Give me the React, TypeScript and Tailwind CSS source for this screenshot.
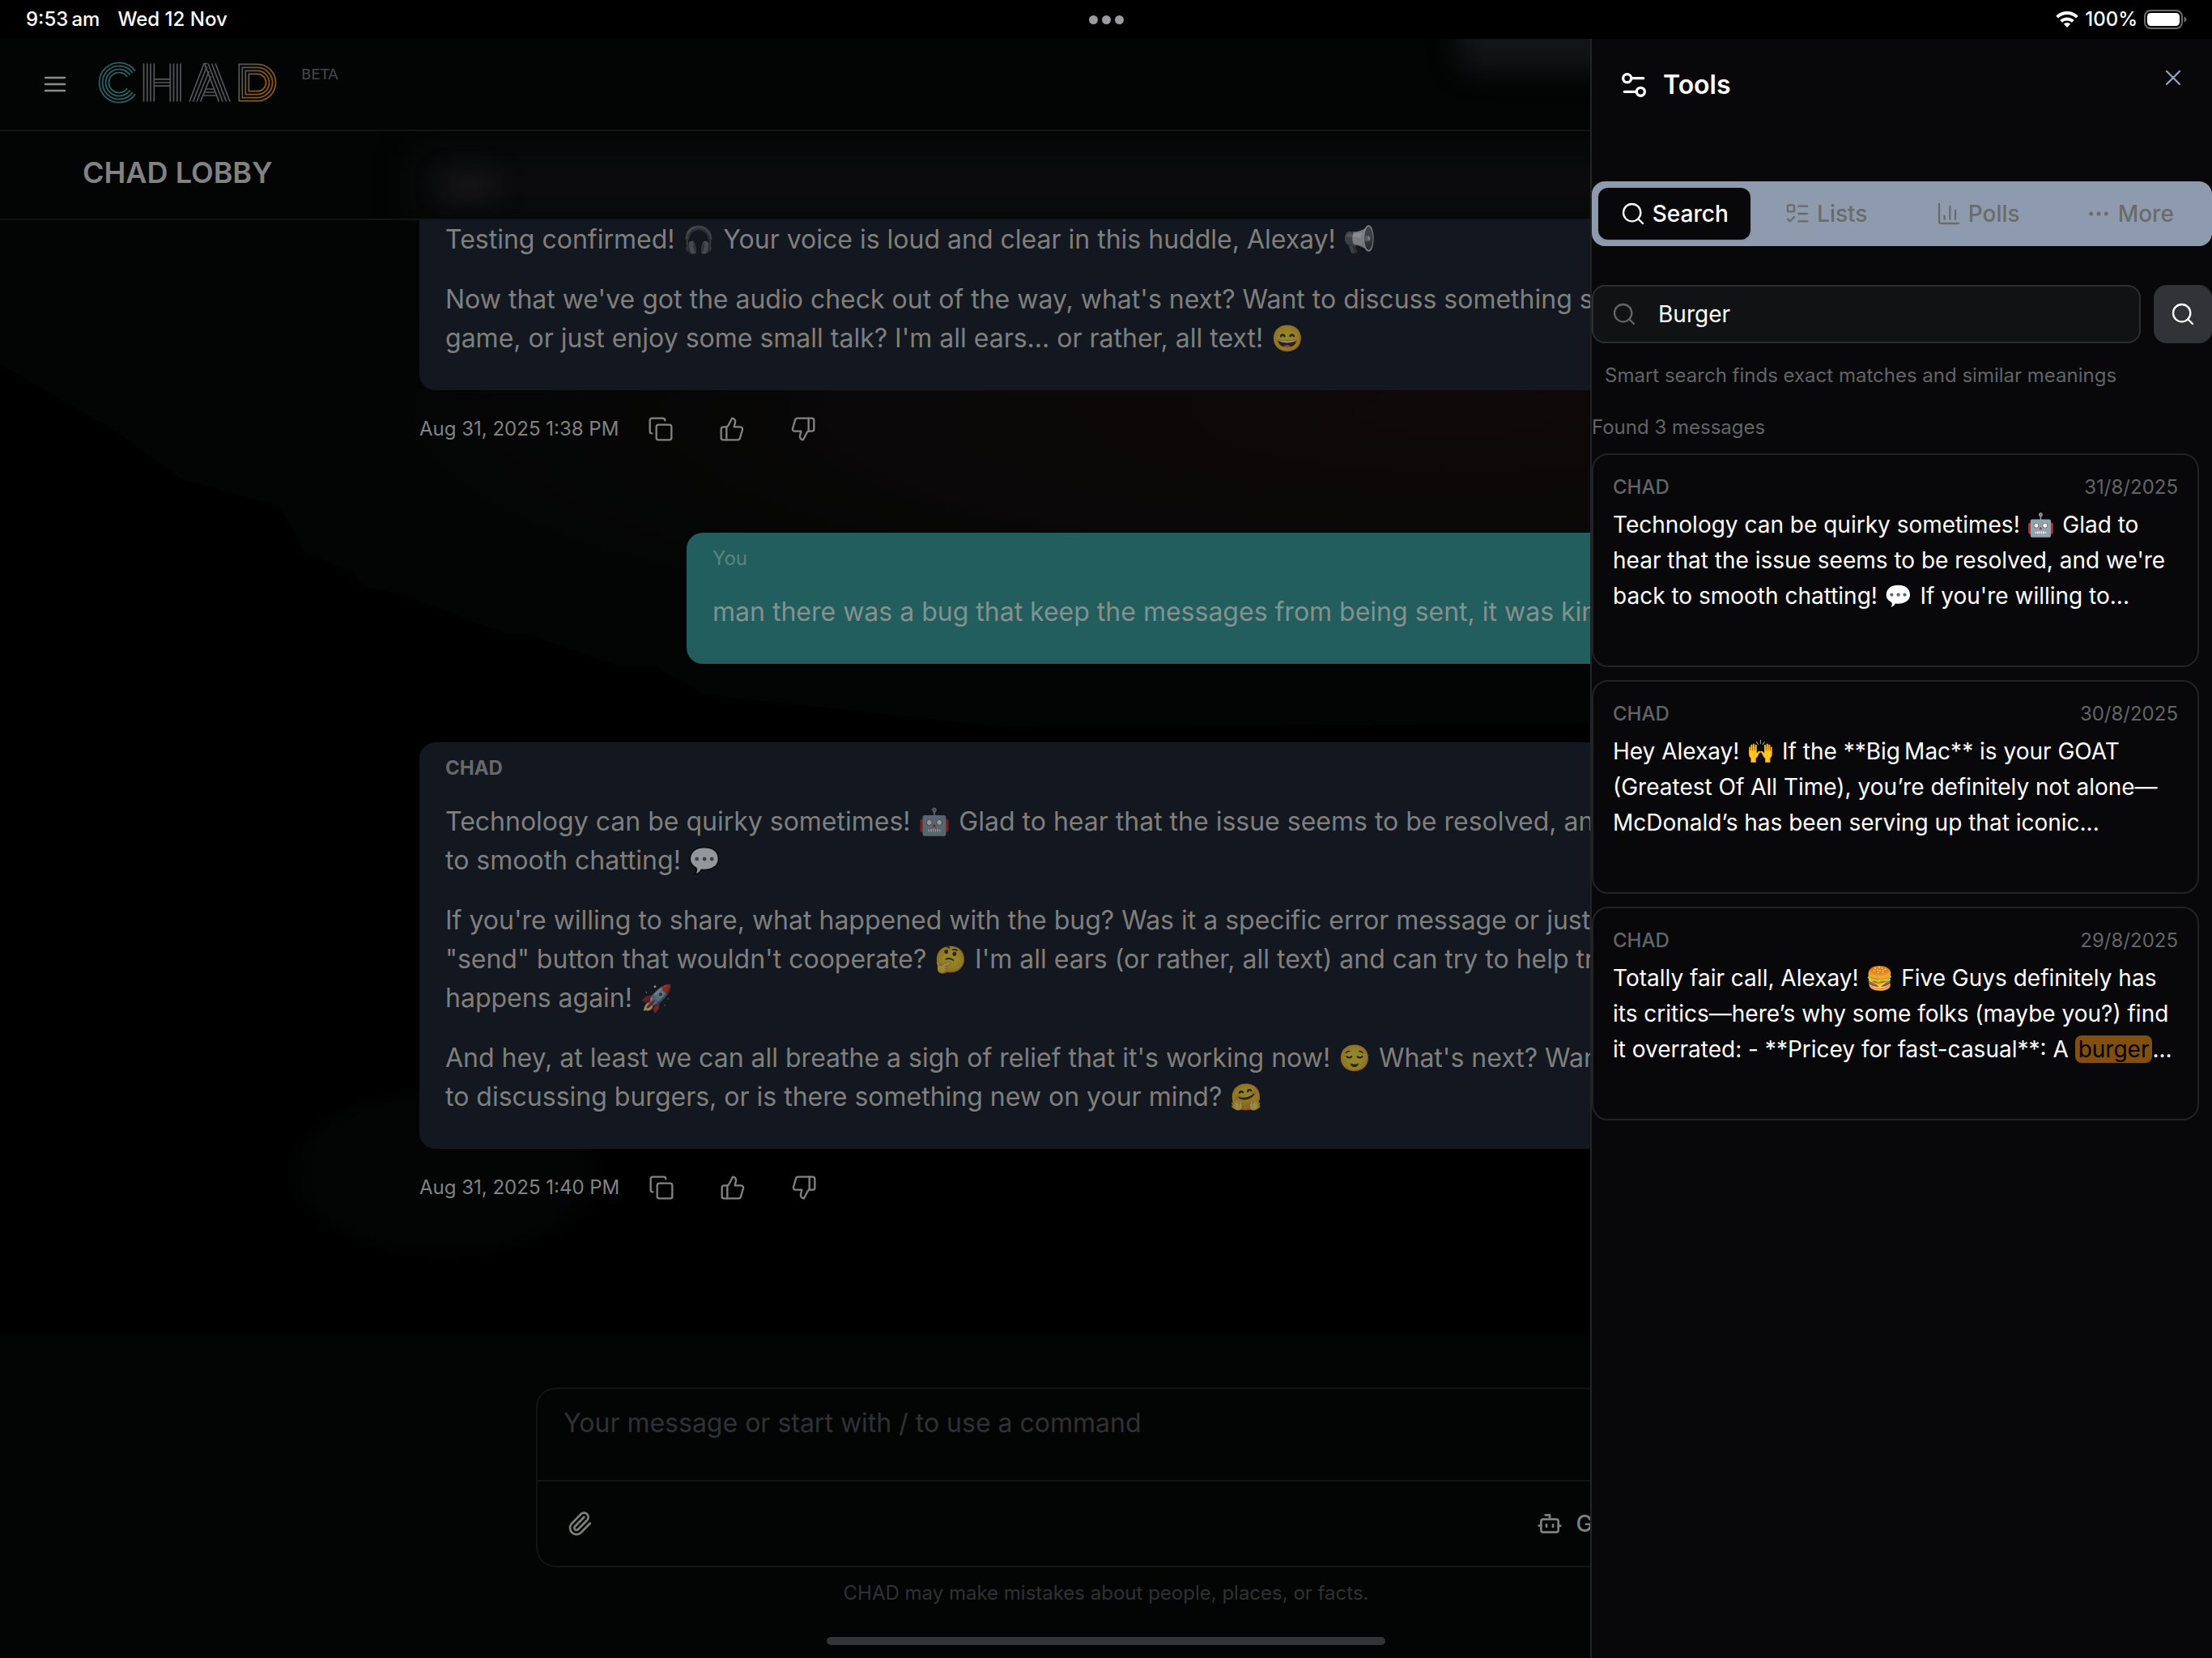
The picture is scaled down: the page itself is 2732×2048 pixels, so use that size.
import React from 'react'
import {
  Bot,
  ChartColumn,
  Copy,
  Ellipsis,
  ListTodo,
  Paperclip,
  Search,
  Settings2,
  ThumbsDown,
  ThumbsUp,
  X,
} from 'lucide-react'

function StatusBar() {
  return (
    <div className="relative flex h-12 items-center justify-between bg-black pl-8 pr-[30px] text-2xl font-medium text-white">
      <div className="flex gap-[22px]">
        <span>9:53{'\u2009'}am</span>
        <span>Wed 12 Nov</span>
      </div>
      <div className="absolute inset-x-0 flex justify-center gap-[5px]">
        <span className="size-[11px] rounded-full bg-[#9a9a9f]" />
        <span className="size-[11px] rounded-full bg-[#9a9a9f]" />
        <span className="size-[11px] rounded-full bg-[#9a9a9f]" />
      </div>
      <div className="flex items-center gap-2">
        <svg viewBox="0 0 28 20" className="h-5 w-7" fill="none" stroke="#fff" strokeWidth="4">
          <path d="M1.6 7.2a17.6 17.6 0 0 1 24.8 0" />
          <path d="M6.6 12.4a10.6 10.6 0 0 1 14.8 0" />
          <path d="M14 20l-4.2-4.4a6 6 0 0 1 8.4 0z" fill="#fff" stroke="none" />
        </svg>
        <span>100%</span>
        <svg viewBox="0 0 54 24" className="h-6 w-[54px]">
          <rect x="1" y="1" width="46" height="22" rx="7" fill="none" stroke="#6b6b6b" strokeWidth="2" />
          <rect x="4" y="4" width="40" height="16" rx="4.5" fill="#fff" />
          <path d="M49.5 8.5c2 .8 3 2 3 3.5s-1 2.7-3 3.5z" fill="#6b6b6b" />
        </svg>
      </div>
    </div>
  )
}

function Logo() {
  return (
    <svg viewBox="0 0 224 56" className="h-14 w-56" fill="none" strokeWidth="1.7" role="img" aria-label="CHAD">
      <defs>
        <linearGradient id="dFill" gradientUnits="userSpaceOnUse" x1="176" y1="20" x2="210" y2="36">
          <stop offset="0" stopColor="#56565a" />
          <stop offset="0.5" stopColor="#7a5a30" />
          <stop offset="1" stopColor="#96590c" />
        </linearGradient>
      </defs>
      <g stroke="#2a686a">
        <path d="M47.1 13.8A24.5 24.5 0 1 0 47.1 42.2" />
        <path d="M43.8 16.1A20.5 20.5 0 1 0 43.8 39.9" />
        <path d="M40.5 18.4A16.5 16.5 0 1 0 40.5 37.6" />
        <path d="M37.2 20.8A12.5 12.5 0 1 0 37.2 35.2" />
      </g>
      <g stroke="#56565a">
        <path d="M57.5 4.5v47M61.8 4.5v47M66 4.5v47M70.3 4.5v47M90.3 4.5v47M94.5 4.5v47M98.8 4.5v47M103 4.5v47" />
        <path d="M70.3 23.8h20M70.3 28h20M70.3 32.2h20" />
        <path d="M114 51.5l18-47h4M118.5 51.5l17-43.5M123 51.5l15-37.5M127.5 51.5l13-31.5" />
        <path d="M164 51.5l-18-47M159.5 51.5l-18-47M155 51.5l-18-47M150.5 51.5l-18-47" />
        <path d="M134.5 36h10M133 40h13M131.5 44h16" />
      </g>
      <g stroke="url(#dFill)">
        <path d="M175.3 5.3h22.5a22.7 22.7 0 0 1 0 45.4h-22.5z" />
        <path d="M179.3 9.3h18.5a18.7 18.7 0 0 1 0 37.4h-18.5z" />
        <path d="M183.3 13.3h14.5a14.7 14.7 0 0 1 0 29.4h-14.5z" />
        <path d="M187.3 17.3h10.5a10.7 10.7 0 0 1 0 21.4h-10.5z" />
      </g>
    </svg>
  )
}

// Faint artwork behind the conversation
function Backdrop() {
  return (
    <svg
      className="absolute inset-0 size-full"
      viewBox="0 0 2732 2000"
      preserveAspectRatio="none"
      aria-hidden="true"
    >
      <defs>
        <radialGradient id="ember">
          <stop offset="0" stopColor="#0f0909" />
          <stop offset="0.5" stopColor="#0a0808" />
          <stop offset="1" stopColor="#030504" stopOpacity="0" />
        </radialGradient>
        <radialGradient id="glow">
          <stop offset="0.8" stopColor="#030504" />
          <stop offset="1" stopColor="#030504" stopOpacity="0" />
        </radialGradient>
      </defs>
      <path
        fill="#030504"
        d="M0 0V402L145 486 225 544 345 577 375 632 435 660 450 677 490 684 625 735 650 735 765 775 810 775 870 810 1240 850 2732 840V0z"
      />
      <ellipse cx="1800" cy="460" rx="1500" ry="340" fill="url(#ember)" />
      <ellipse cx="550" cy="1400" rx="200" ry="108" fill="url(#glow)" />
    </svg>
  )
}

// Splits a line so that emoji can be dimmed together with the text around them
function EmojiText({ text, dim }: { text: string; dim?: boolean }) {
  return (
    <>
      {text.split(/(\p{Extended_Pictographic})/u).map((part, i) => {
        if (i % 2 === 0) return part
        if (part === '📢')
          return (
            <span key={i} className="px-px opacity-50 grayscale">
              {part}
            </span>
          )
        return (
          <span key={i} className={dim ? 'px-px opacity-55' : 'px-px'}>
            {part}
          </span>
        )
      })}
    </>
  )
}

type Paragraph = string[]

const firstReply: Paragraph[] = [
  ['Testing confirmed! 🎧 Your voice is loud and clear in this huddle, Alexay! 📢'],
  [
    "Now that we've got the audio check out of the way, what's next? Want to discuss something specific, play a",
    "game, or just enjoy some small talk? I'm all ears... or rather, all text! 😄",
  ],
]

const secondReply: Paragraph[] = [
  [
    "Technology can be quirky sometimes! 🤖 Glad to hear that the issue seems to be resolved, and we're back",
    'to smooth chatting! 💬',
  ],
  [
    "If you're willing to share, what happened with the bug? Was it a specific error message or just a",
    '"send" button that wouldn\'t cooperate? 🤔 I\'m all ears (or rather, all text) and can try to help troubleshoot if it',
    'happens again! 🚀',
  ],
  [
    "And hey, at least we can all breathe a sigh of relief that it's working now! 😌 What's next? Want to get back",
    'to discussing burgers, or is there something new on your mind? 🤗',
  ],
]

function Body({ paragraphs }: { paragraphs: Paragraph[] }) {
  return (
    <div className="flex flex-col gap-[26px] text-[32px] leading-[48px] text-[#7f7f7d]">
      {paragraphs.map((lines) => (
        <p key={lines[0]} className="whitespace-nowrap">
          {lines.map((line) => (
            <span key={line} className="block">
              <EmojiText text={line} dim />
            </span>
          ))}
        </p>
      ))}
    </div>
  )
}

function MessageMeta({ date }: { date: string }) {
  return (
    <div className="mt-6 flex h-12 items-center text-[#828282]">
      <time className="mr-9 text-2xl">{date}</time>
      <div className="flex gap-14">
        <button type="button" aria-label="Copy">
          <Copy className="size-8" strokeWidth={1.75} />
        </button>
        <button type="button" aria-label="Like">
          <ThumbsUp className="size-8" strokeWidth={1.75} />
        </button>
        <button type="button" aria-label="Dislike">
          <ThumbsDown className="size-8" strokeWidth={1.75} />
        </button>
      </div>
    </div>
  )
}

function Conversation() {
  return (
    <main className="flex-1">
      <div className="mx-auto w-full max-w-[1696px] overflow-hidden">
        <div className="rounded-b-[20px] bg-[#131820] px-8 pb-10">
          <Body paragraphs={firstReply} />
        </div>
        <MessageMeta date="Aug 31, 2025 1:38 PM" />

        <div className="ml-auto mt-[104px] w-full max-w-[1366px] overflow-hidden rounded-[20px] bg-[#225e5e] px-8 pb-10 pt-4">
          <p className="mb-[26px] text-2xl leading-8 text-[#5f8381]">You</p>
          <p className="whitespace-nowrap text-[32px] leading-[48px] text-[#84918f]">
            man there was a bug that keep the messages from being sent, it was kind of annoying
          </p>
        </div>

        <div className="mt-[97px] rounded-[20px] bg-[#131820] px-8 pb-10 pt-4">
          <p className="mb-[26px] text-2xl font-bold leading-8 text-[#66686a]">CHAD</p>
          <Body paragraphs={secondReply} />
        </div>
        <MessageMeta date="Aug 31, 2025 1:40 PM" />
      </div>
    </main>
  )
}

function Composer() {
  return (
    <footer className="bg-[#030504] pt-16">
      <div className="mx-auto w-full max-w-[1408px] rounded-3xl border-2 border-[#131415]">
        <textarea
          aria-label="Message"
          placeholder="Your message or start with / to use a command"
          className="block h-28 w-full resize-none bg-transparent px-8 py-[18px] text-[32px] leading-[48px] text-[#7f7f7d] outline-none placeholder:text-[#303135]"
        />
        <div className="flex h-[106px] items-center justify-between border-t-2 border-[#131415] pl-9 pr-[18px] text-[#7f7f7d]">
          <button type="button" aria-label="Attach file">
            <Paperclip className="size-8" />
          </button>
          <button type="button" className="flex items-center gap-4 text-[28px] font-medium">
            <Bot className="size-8" />
            GPT-4o
          </button>
        </div>
      </div>
      <p className="mt-4 text-center text-2xl leading-8 text-[#303135]">
        CHAD may make mistakes about people, places, or facts.
      </p>
      <div className="mx-auto mb-4 mt-[38px] h-[10px] w-[690px] rounded-full bg-[#333438]" />
    </footer>
  )
}

const tabs = [
  { label: 'Search', icon: Search },
  { label: 'Lists', icon: ListTodo },
  { label: 'Polls', icon: ChartColumn },
  { label: 'More', icon: Ellipsis },
]

function ToolTabs() {
  return (
    <div role="tablist" className="flex h-20 rounded-2xl bg-[#8e9aae] p-2">
      {tabs.map(({ label, icon: Icon }, i) => (
        <button
          key={label}
          type="button"
          role="tab"
          aria-selected={i === 0}
          className={
            i === 0
              ? 'flex flex-1 items-center justify-center gap-2 rounded-xl bg-[#08080a] text-[28px] font-medium text-white shadow-sm'
              : 'flex flex-1 items-center justify-center gap-2 text-[28px] font-medium text-[#6a6b6b]'
          }
        >
          <Icon className="size-8" strokeWidth={1.75} />
          {label}
        </button>
      ))}
    </div>
  )
}

interface Result {
  date: string
  lines: React.ReactNode[]
}

const results: Result[] = [
  {
    date: '31/8/2025',
    lines: [
      <EmojiText text="Technology can be quirky sometimes! 🤖 Glad to" />,
      "hear that the issue seems to be resolved, and we're",
      <EmojiText text="back to smooth chatting! 💬 If you're willing to..." />,
    ],
  },
  {
    date: '30/8/2025',
    lines: [
      <EmojiText text={'Hey Alexay! 🙌 If the **Big\u2009Mac** is your GOAT'} />,
      '(Greatest Of All Time), you’re definitely not alone—',
      'McDonald’s has been serving up that iconic...',
    ],
  },
  {
    date: '29/8/2025',
    lines: [
      <EmojiText text="Totally fair call, Alexay! 🍔 Five Guys definitely has" />,
      'its critics—here’s why some folks (maybe you?) find',
      <>
        it overrated: - **Pricey for fast-casual**: A{' '}
        <mark className="rounded-lg bg-[#824f0e] px-1 text-black">burger</mark>...
      </>,
    ],
  },
]

function ResultCard({ result }: { result: Result }) {
  return (
    <article className="rounded-[20px] border-2 border-[#222326] px-6 pb-16 pt-6">
      <div className="mb-2 flex justify-between text-2xl leading-8 text-[#626466]">
        <span className="font-medium">CHAD</span>
        <time>{result.date}</time>
      </div>
      <p className="whitespace-nowrap text-[28px] leading-[44px] text-white">
        {result.lines.map((line, i) => (
          <span key={i} className="block">
            {line}
          </span>
        ))}
      </p>
    </article>
  )
}

function ToolsDrawer() {
  return (
    <aside className="w-[768px] shrink-0 border-l-2 border-[#222326] bg-[#08080a]">
      <div className="flex h-44 items-start justify-between px-8 pt-8">
        <h2 className="flex items-center gap-4 pt-[5px] text-[32px] font-semibold leading-[40px] text-white">
          <Settings2 className="size-10" />
          Tools
        </h2>
        <button type="button" aria-label="Close" className="text-[#94a3b8]">
          <X className="size-8" strokeWidth={1.75} />
        </button>
      </div>

      <ToolTabs />

      <form className="mt-12 flex gap-4">
        <div className="relative flex-1">
          <Search className="absolute left-6 top-5 size-8 text-[#626466]" strokeWidth={1.75} />
          <input
            type="text"
            aria-label="Search messages"
            defaultValue="Burger"
            className="h-[72px] w-full rounded-2xl border-2 border-[#2d2e31] bg-[#111214] pl-20 pr-6 text-[28px] text-white outline-none"
          />
        </div>
        <button
          type="submit"
          aria-label="Search"
          className="flex size-[72px] items-center justify-center rounded-2xl bg-[#323337] text-white"
        >
          <Search className="size-8" strokeWidth={1.75} />
        </button>
      </form>
      <p className="mt-6 px-4 text-2xl leading-8 text-[#626466]">
        Smart search finds exact matches and similar meanings
      </p>

      <p className="mt-8 text-2xl leading-8 text-[#626466]">Found 3 messages</p>
      <div className="mt-4 flex flex-col gap-4 pr-4">
        {results.map((result) => (
          <ResultCard key={result.date} result={result} />
        ))}
      </div>
    </aside>
  )
}

export default function App(): React.ReactElement {
  return (
    <div className="flex min-h-screen flex-col overflow-hidden bg-black font-['Inter','Noto_Color_Emoji',sans-serif]">
      <StatusBar />
      <div className="flex flex-1">
        {/* the chat keeps the full window width and runs on under the drawer */}
        <div className="flex min-w-0 flex-1 overflow-hidden">
          <div className="relative flex w-screen shrink-0 flex-col">
            <Backdrop />
            <div className="relative flex flex-1 flex-col">
              <header className="relative flex h-[114px] items-start overflow-hidden border-b-2 border-[#131415] bg-[#030504] pl-[52px] pt-[26px]">
                <div className="absolute -top-20 left-[1800px] h-[120px] w-[600px] rounded-3xl bg-[#131416] blur-lg" />
                <button type="button" aria-label="Open menu" className="mr-9 mt-[14px]">
                  <svg viewBox="0 0 32 32" className="size-8" stroke="#8a8a8a" strokeWidth="2.5" strokeLinecap="round">
                    <path d="M4 8h24M4 16h24M4 24h24" />
                  </svg>
                </button>
                <Logo />
                <span className="ml-7 mt-1 font-['DejaVu_Sans',sans-serif] text-lg text-[#48484c]">BETA</span>
              </header>
              <div className="relative flex h-[110px] items-center overflow-hidden border-b-2 border-[#131415] bg-[#030504] pb-1.5 pl-[102px]">
                <div className="absolute -right-10 bottom-0 left-[518px] h-20 bg-[#0c0c0e] blur-xl" />
                <div className="absolute bottom-8 left-[548px] h-5 w-16 bg-[#1d1d20] blur-lg" />
                <h1 className="text-4xl font-semibold text-[#828282]">CHAD LOBBY</h1>
              </div>
              <Conversation />
              <Composer />
            </div>
          </div>
        </div>
        <ToolsDrawer />
      </div>
    </div>
  )
}
